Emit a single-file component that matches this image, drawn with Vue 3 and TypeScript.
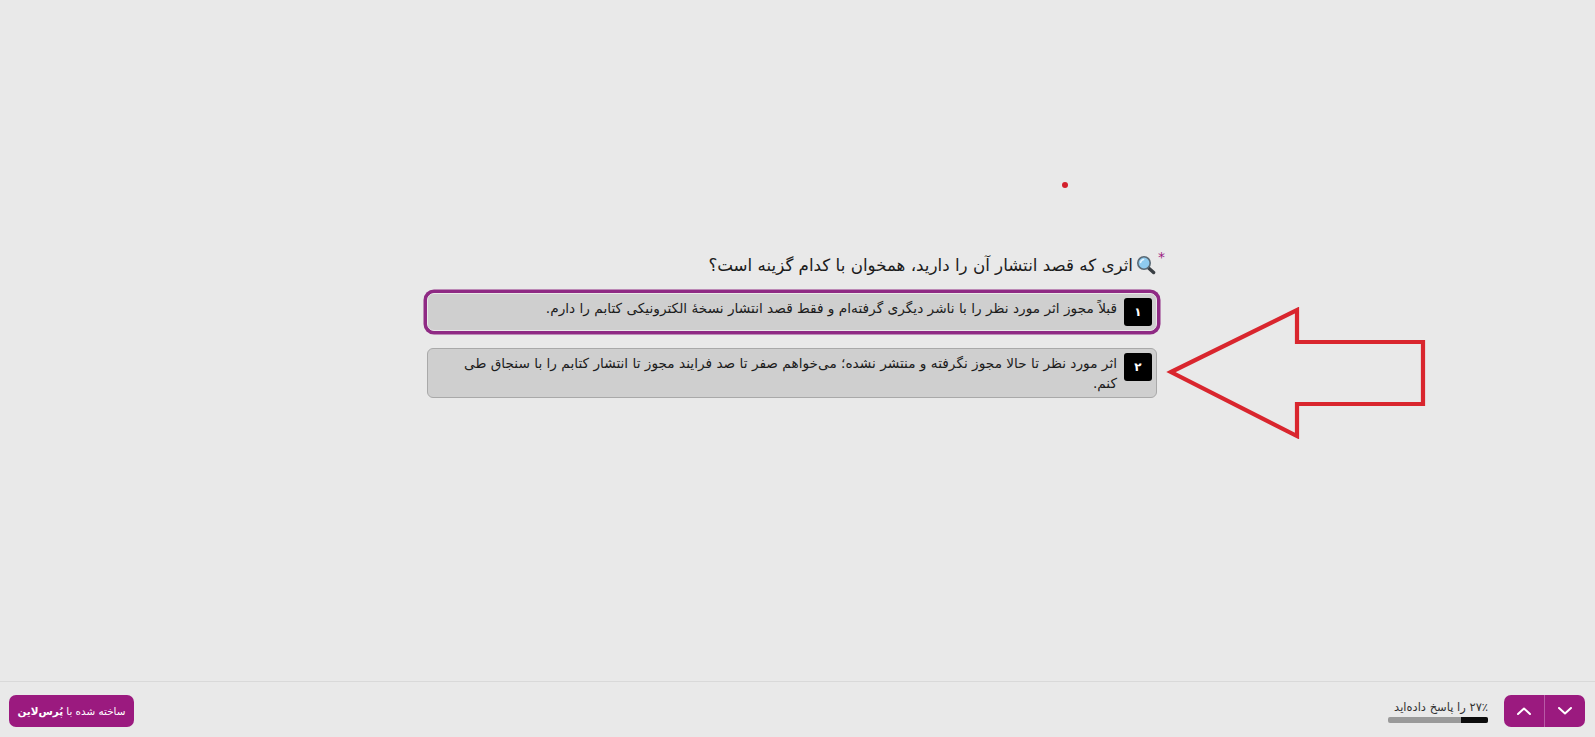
<script setup lang="ts">
interface Option { key: string; text: string; selected: boolean }
const options: Option[] = [
  { key: '۱', text: 'قبلاً مجوز اثر مورد نظر را با ناشر دیگری گرفته‌ام و فقط قصد انتشار نسخهٔ الکترونیکی کتابم را دارم.', selected: true },
  { key: '۲', text: 'اثر مورد نظر تا حالا مجوز نگرفته و منتشر نشده؛ می‌خواهم صفر تا صد فرایند مجوز تا انتشار کتابم را با سنجاق طی کنم.', selected: false },
]
</script>

<template>
  <div class="page">
    <main class="main">
      <span class="dot"></span>
      <section class="form" dir="rtl">
        <h1 class="question">
          <span class="star">*</span>
          <svg class="mag" viewBox="0 0 20 20" width="20" height="20" aria-hidden="true">
            <path d="M12 12.5l5.6 5" stroke="#3a3f44" stroke-width="3.4" stroke-linecap="round" fill="none" />
            <circle cx="8" cy="8" r="6.2" fill="#8fcbef" stroke="#5b6a75" stroke-width="1.6" />
            <path d="M4.6 7.4a3.6 3.6 0 0 1 3-3" stroke="#e6f6ff" stroke-width="1.5" stroke-linecap="round" fill="none" />
          </svg>
          <span>اثری که قصد انتشار آن را دارید، همخوان با کدام گزینه است؟</span>
        </h1>
        <div v-for="o in options" :key="o.key" class="option" :class="{ selected: o.selected }">
          <span class="key">{{ o.key }}</span>
          <span class="label">{{ o.text }}</span>
        </div>
      </section>
      <svg class="arrow" viewBox="0 0 262 132" width="262" height="132" aria-hidden="true">
        <path d="M5 65 L131 3 V35 H257 V97 H131 V129 Z" fill="none" stroke="#d9262e" stroke-width="4.2" stroke-linejoin="miter" />
      </svg>
    </main>
    <footer class="footer">
      <a class="brand" dir="rtl">ساخته شده با <b>پُرس‌لاین</b></a>
      <div class="right">
        <div class="progress" dir="rtl">
          <span class="ptext">۲۷٪ را پاسخ داده‌اید</span>
          <div class="track"><div class="fill"></div></div>
        </div>
        <div class="nav">
          <button class="navbtn" aria-label="up">
            <svg viewBox="0 0 14 8" width="14" height="8"><path d="M1 7l6-5.5L13 7" fill="none" stroke="#fff" stroke-width="2" stroke-linecap="round" stroke-linejoin="round" /></svg>
          </button>
          <button class="navbtn" aria-label="down">
            <svg viewBox="0 0 14 8" width="14" height="8"><path d="M1 1l6 5.5L13 1" fill="none" stroke="#fff" stroke-width="2" stroke-linecap="round" stroke-linejoin="round" /></svg>
          </button>
        </div>
      </div>
    </footer>
  </div>
</template>

<style>
html, body { margin: 0; background: #e9e9e9; }
</style>

<style scoped>
.page {
  height: 737px;
  display: flex;
  flex-direction: column;
  background: #e9e9e9;
  font-family: "DejaVu Sans", sans-serif;
  color: #1c1c1c;
  overflow: hidden;
}
.main {
  position: relative;
  flex: 1;
  display: flex;
  justify-content: center;
  align-items: flex-start;
  padding: 254px 12px 0 0;
}
.dot {
  position: absolute;
  left: 1062px;
  top: 182px;
  width: 6px;
  height: 6px;
  border-radius: 50%;
  background: #d3202c;
}
.form { width: 735px; }
.question {
  position: relative;
  display: flex;
  align-items: center;
  gap: 3px;
  margin: 0 3px 17px 0;
  height: 22px;
  font-size: 16.7px;
  font-weight: 400;
  color: #1c1c1c;
  white-space: nowrap;
}
.star {
  position: absolute;
  right: -9px;
  top: -4px;
  color: #9b1a7f;
  font-size: 14px;
  line-height: 1;
}
.mag { flex: none; }
.option {
  box-sizing: border-box;
  display: flex;
  align-items: flex-start;
  gap: 7px;
  margin: 0 2px 17px 3px;
  padding: 4px 4px 4px 5px;
  background: #cfcfcf;
  border: 1px solid #a9a9a9;
  border-radius: 6px;
  font-size: 13.7px;
  line-height: 20px;
}
.option.selected {
  border-color: #e9e9e9;
  box-shadow: 0 0 0 3.5px #8f2a84;
  border-radius: 7px;
}
.key {
  flex: none;
  width: 28px;
  height: 28px;
  display: flex;
  align-items: center;
  justify-content: center;
  background: #000;
  color: #fff;
  border-radius: 3px;
  font-weight: 700;
  font-size: 12px;
}
.label { flex: 1; padding-left: 20px; }
.arrow {
  position: absolute;
  left: 1166px;
  top: 307px;
}
.footer {
  box-sizing: border-box;
  height: 56px;
  flex: none;
  border-top: 1px solid #d9d9d9;
  display: flex;
  justify-content: space-between;
  align-items: flex-start;
  padding: 13px 10px 0 9px;
}
.brand {
  width: 125px;
  height: 32px;
  display: flex;
  align-items: center;
  justify-content: center;
  gap: 3px;
  background: #9b1a7f;
  color: #fff;
  border-radius: 7px;
  font-size: 10.4px;
  white-space: nowrap;
}
.brand b { font-weight: 700; }
.right {
  display: flex;
  align-items: flex-start;
  gap: 16px;
}
.progress {
  width: 100px;
  padding-top: 4px;
}
.ptext {
  display: block;
  font-size: 11.5px;
  line-height: 16px;
  color: #333;
  white-space: nowrap;
}
.track {
  height: 6px;
  margin-top: 2px;
  background: #9a9a9a;
  border-radius: 2px;
  overflow: hidden;
}
.fill {
  width: 27%;
  height: 100%;
  background: #0c0c0c;
}
.nav {
  width: 81px;
  height: 32px;
  display: flex;
  background: #9b1a7f;
  border-radius: 7px;
  overflow: hidden;
}
.navbtn {
  flex: 1;
  border: 0;
  padding: 0;
  background: transparent;
  display: flex;
  align-items: center;
  justify-content: center;
}
.navbtn + .navbtn { border-left: 1px solid #b85aa6; }
</style>
